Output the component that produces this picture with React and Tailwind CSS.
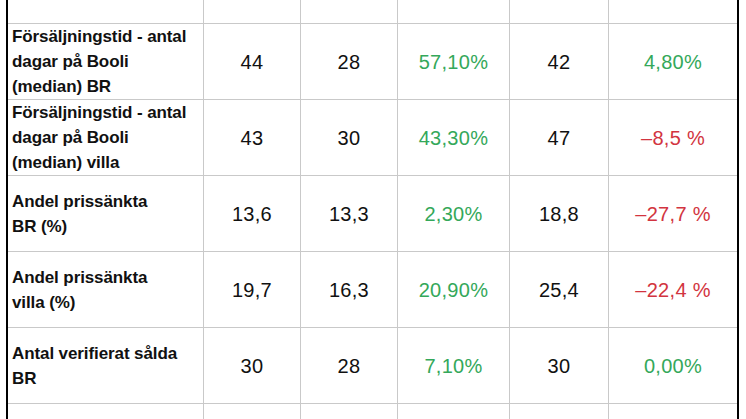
const ROWS = [
  { label: ['Försäljningstid - antal', 'dagar på Booli', '(median) BR'], a: '44', b: '28', c: '57,10%', cUp: true, d: '42', e: '4,80%', eUp: true },
  { label: ['Försäljningstid - antal', 'dagar på Booli', '(median) villa'], a: '43', b: '30', c: '43,30%', cUp: true, d: '47', e: '–8,5 %', eUp: false },
  { label: ['Andel prissänkta', 'BR (%)'], a: '13,6', b: '13,3', c: '2,30%', cUp: true, d: '18,8', e: '–27,7 %', eUp: false },
  { label: ['Andel prissänkta', 'villa (%)'], a: '19,7', b: '16,3', c: '20,90%', cUp: true, d: '25,4', e: '–22,4 %', eUp: false },
  { label: ['Antal verifierat sålda', 'BR'], a: '30', b: '28', c: '7,10%', cUp: true, d: '30', e: '0,00%', eUp: true },
]

const num = "flex items-center justify-center bg-white text-[20px] tracking-[0.3px] font-['Liberation_Sans',Arial,sans-serif]"

function Blank() {
  return (
    <>
      {[0, 1, 2, 3, 4, 5].map(i => (
        <div key={i} className="bg-white" />
      ))}
    </>
  )
}

export default function App() {
  return (
    <div className="w-[746px] h-[419px] overflow-hidden bg-white pl-[6px]">
      <div className="w-[733px] border-x-2 border-black">
        <div className="grid grid-cols-[195px_96px_96px_111px_98px_128px] grid-rows-[23px_repeat(5,75px)_40px] gap-px bg-[#c9c9c9]">
          <Blank />
          {ROWS.map((r, i) => (
            <div key={i} className="contents">
              <div className="flex flex-col justify-center bg-white pl-[4px] text-[17px] leading-[25px] font-bold text-[#111] font-['Liberation_Sans',Arial,sans-serif] tracking-[-0.1px]">
                {r.label.map((l, j) => <span key={j} className="whitespace-nowrap">{l}</span>)}
              </div>
              <div className={`${num} text-[#111]`}>{r.a}</div>
              <div className={`${num} text-[#111]`}>{r.b}</div>
              <div className={`${num} ${r.cUp ? 'text-[#34a85a]' : 'text-[#d23440]'}`}>{r.c}</div>
              <div className={`${num} text-[#111]`}>{r.d}</div>
              <div className={`${num} ${r.eUp ? 'text-[#34a85a]' : 'text-[#d23440]'}`}>{r.e}</div>
            </div>
          ))}
          <Blank />
        </div>
      </div>
    </div>
  )
}
